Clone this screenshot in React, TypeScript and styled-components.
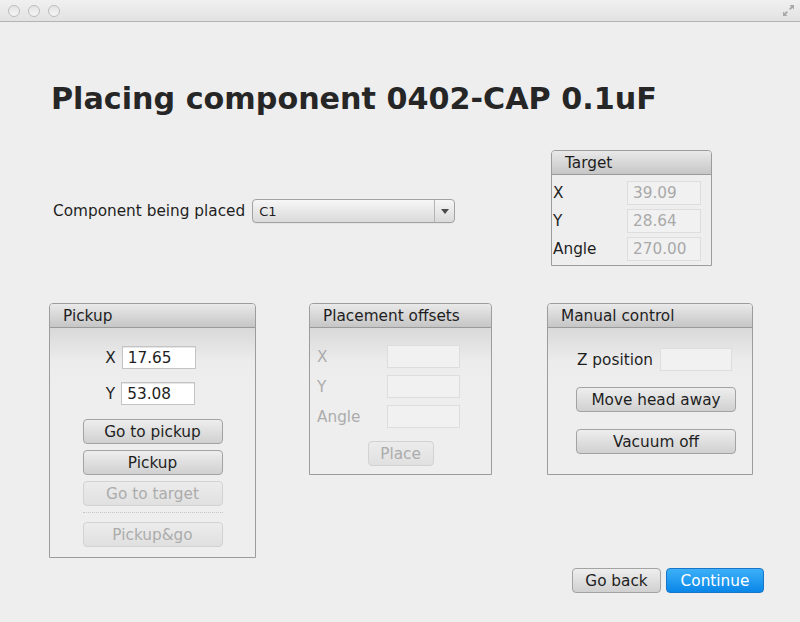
import React from "react";
import styled, { createGlobalStyle, css } from "styled-components";

const Global = createGlobalStyle`
  html, body { margin: 0; padding: 0; background: #eeeeee; }
  body { font-family: "DejaVu Sans", "Liberation Sans", sans-serif; }
  * { box-sizing: border-box; }
`;

const Window = styled.div`
  width: 800px;
  height: 622px;
  background: #eeeeee;
  display: flex;
  flex-direction: column;
  font-family: "DejaVu Sans", "Liberation Sans", sans-serif;
  font-size: 15.3px;
  color: #1e1e1e;
`;

const TitleBar = styled.div`
  height: 22px;
  flex: none;
  background: linear-gradient(#f0f0f0, #e2e2e2);
  border-bottom: 1px solid #b4b4b4;
  display: flex;
  align-items: center;
  padding: 0 0 0 8px;
  gap: 8px;
`;

const Light = styled.span`
  width: 12px;
  height: 12px;
  border-radius: 50%;
  border: 1px solid #bdbdbd;
  background: linear-gradient(#e4e4e4, #f4f4f4);
`;

const FullScreen = styled.svg`
  margin-left: auto;
  margin-right: 5px;
  width: 13px;
  height: 13px;
`;

const Title = styled.h1`
  margin: 59px 0 0 51px;
  font-size: 30.2px;
  line-height: 36px;
  font-weight: bold;
  color: #262626;
`;

const TopRow = styled.div`
  display: flex;
  justify-content: space-between;
  align-items: flex-start;
  margin-top: 33px;
  padding: 0 88px 0 53px;
`;

const ComboRow = styled.div`
  display: flex;
  align-items: center;
  gap: 7px;
  margin-top: 49px;
`;

const Label = styled.span<{ $disabled?: boolean }>`
  color: ${(p) => (p.$disabled ? "#acacac" : "#1e1e1e")};
  white-space: nowrap;
`;

const Combo = styled.div`
  width: 203px;
  height: 24px;
  border: 1px solid #a2a2a2;
  border-radius: 4px;
  background: linear-gradient(#f6f6f6, #dadada);
  display: flex;
  align-items: stretch;
  font-size: 13px;
  box-shadow: 0 1px 0 rgba(0, 0, 0, 0.04);
`;

const ComboText = styled.span`
  flex: 1;
  display: flex;
  align-items: center;
  padding-left: 6px;
  color: #1e1e1e;
`;

const ComboArrow = styled.span`
  width: 20px;
  border-left: 1px solid #b4b4b4;
  display: flex;
  align-items: center;
  justify-content: center;
  &::after {
    content: "";
    border-left: 4px solid transparent;
    border-right: 4px solid transparent;
    border-top: 5px solid #4a4a4a;
  }
`;

const Panel = styled.div<{ $w: number; $h?: number; $ml?: number }>`
  width: ${(p) => p.$w}px;
  ${(p) => (p.$h ? `height: ${p.$h}px;` : "")}
  margin-left: ${(p) => p.$ml ?? 0}px;
  border: 1px solid #9c9c9c;
  border-radius: 4px 4px 0 0;
  display: flex;
  flex-direction: column;
  flex: none;
`;

const PanelHeader = styled.div`
  height: 24px;
  flex: none;
  border-radius: 3px 3px 0 0;
  background: linear-gradient(#e9e9e9, #c6c6c6);
  border-bottom: 1px solid #9a9a9a;
  padding-left: 13px;
  display: flex;
  align-items: center;
  color: #1e1e1e;
`;

const PanelBody = styled.div<{ $flat?: boolean }>`
  flex: 1;
  display: flex;
  flex-direction: column;
  ${(p) =>
    p.$flat
      ? css`
          background: #eeeeee;
        `
      : css`
          background: linear-gradient(#d9d9d9 0px, #ececec 34px, #eeeeee 60px);
        `}
`;

const Field = styled.div<{ $w: number; $disabled?: boolean; $h?: number }>`
  width: ${(p) => p.$w}px;
  height: ${(p) => p.$h ?? 23}px;
  display: flex;
  align-items: center;
  padding-left: 5px;
  ${(p) =>
    p.$disabled
      ? css`
          background: #f1f1f1;
          border: 1px solid #dddddd;
          color: #a9a9a9;
        `
      : css`
          background: #ffffff;
          border: 1px solid #c4c4c4;
          box-shadow: inset 0 1px 0 #e6e6e6;
          color: #1e1e1e;
        `}
`;

const TargetGrid = styled.div`
  display: grid;
  grid-template-columns: 74px 74px;
  row-gap: 4px;
  align-items: center;
  padding: 6px 0 4px 1px;
`;

const Button = styled.button<{ $w: number; $primary?: boolean }>`
  width: ${(p) => p.$w}px;
  height: 25px;
  font-family: inherit;
  font-size: 15.3px;
  border-radius: 4px;
  padding: 0;
  flex: none;
  ${(p) =>
    p.$primary
      ? css`
          background: linear-gradient(#3cb0f7, #0a86e8);
          border: 1px solid #1776c9;
          color: #ffffff;
        `
      : css`
          background: linear-gradient(#eeeeee, #d0d0d0);
          border: 1px solid #a3a3a3;
          color: #1e1e1e;
          &:disabled {
            background: linear-gradient(#ececec, #e0e0e0);
            border: 1px solid #d2d2d2;
            color: #acacac;
          }
        `}
`;

const PanelsRow = styled.div`
  display: flex;
  align-items: flex-start;
  margin-top: 37px;
  padding-left: 49px;
`;

const PickupBody = styled(PanelBody)`
  align-items: center;
  padding: 18px 0 10px 2px;
`;

const XYRow = styled.div<{ $mt?: number }>`
  display: flex;
  align-items: center;
  gap: 6px;
  margin-top: ${(p) => p.$mt ?? 0}px;
  margin-left: -6px;
`;

const ButtonStack = styled.div`
  display: flex;
  flex-direction: column;
  gap: 6px;
  margin-top: 14px;
  margin-left: -2px;
`;

const Separator = styled.div`
  height: 0;
  border-top: 1px dotted #c6c6c6;
  margin: 0 0 3px;
`;

const OffsetsBody = styled(PanelBody)`
  padding: 17px 0 0 7px;
`;

const OffsetsGrid = styled.div`
  display: grid;
  grid-template-columns: 70px 73px;
  row-gap: 7px;
  align-items: center;
`;

const CenterRow = styled.div`
  display: flex;
  justify-content: center;
  margin: 13px 0 0 -7px;
`;

const ManualBody = styled(PanelBody)`
  padding: 20px 0 0 28px;
`;

const ZRow = styled.div`
  display: flex;
  align-items: center;
  gap: 7px;
  padding-left: 1px;
`;

const ManualStack = styled.div`
  display: flex;
  flex-direction: column;
  gap: 17px;
  margin-top: 16px;
`;

const Footer = styled.div`
  margin-top: auto;
  display: flex;
  justify-content: flex-end;
  gap: 5px;
  padding: 0 36px 29px 0;
`;

export default function App() {
  return (
    <Window>
      <Global />
      <TitleBar>
        <Light />
        <Light />
        <Light />
        <FullScreen viewBox="0 0 13 13">
          <path d="M7.5 1 H12 V5.5 L10.4 3.9 L8.3 6 L7 4.7 L9.1 2.6 Z" fill="#a9a9a9" />
          <path d="M5.5 12 H1 V7.5 L2.6 9.1 L4.7 7 L6 8.3 L3.9 10.4 Z" fill="#a9a9a9" />
        </FullScreen>
      </TitleBar>

      <Title>Placing component 0402-CAP 0.1uF</Title>

      <TopRow>
        <ComboRow>
          <Label>Component being placed</Label>
          <Combo>
            <ComboText>C1</ComboText>
            <ComboArrow />
          </Combo>
        </ComboRow>
        <Panel $w={161}>
          <PanelHeader>Target</PanelHeader>
          <PanelBody $flat>
            <TargetGrid>
              <Label>X</Label>
              <Field $w={74} $h={24} $disabled>39.09</Field>
              <Label>Y</Label>
              <Field $w={74} $h={24} $disabled>28.64</Field>
              <Label>Angle</Label>
              <Field $w={74} $h={24} $disabled>270.00</Field>
            </TargetGrid>
          </PanelBody>
        </Panel>
      </TopRow>

      <PanelsRow>
        <Panel $w={207} $h={255}>
          <PanelHeader>Pickup</PanelHeader>
          <PickupBody>
            <XYRow>
              <Label>X</Label>
              <Field $w={74}>17.65</Field>
            </XYRow>
            <XYRow $mt={13}>
              <Label>Y</Label>
              <Field $w={74}>53.08</Field>
            </XYRow>
            <ButtonStack>
              <Button $w={140}>Go to pickup</Button>
              <Button $w={140}>Pickup</Button>
              <Button $w={140} disabled>
                Go to target
              </Button>
              <Separator />
              <Button $w={140} disabled>
                Pickup&amp;go
              </Button>
            </ButtonStack>
          </PickupBody>
        </Panel>

        <Panel $w={183} $h={172} $ml={53}>
          <PanelHeader>Placement offsets</PanelHeader>
          <OffsetsBody>
            <OffsetsGrid>
              <Label $disabled>X</Label>
              <Field $w={73} $disabled />
              <Label $disabled>Y</Label>
              <Field $w={73} $disabled />
              <Label $disabled>Angle</Label>
              <Field $w={73} $disabled />
            </OffsetsGrid>
            <CenterRow>
              <Button $w={66} disabled>
                Place
              </Button>
            </CenterRow>
          </OffsetsBody>
        </Panel>

        <Panel $w={206} $h={172} $ml={55}>
          <PanelHeader>Manual control</PanelHeader>
          <ManualBody>
            <ZRow>
              <Label>Z position</Label>
              <Field $w={72} $disabled />
            </ZRow>
            <ManualStack>
              <Button $w={160}>Move head away</Button>
              <Button $w={160}>Vacuum off</Button>
            </ManualStack>
          </ManualBody>
        </Panel>
      </PanelsRow>

      <Footer>
        <Button $w={89}>Go back</Button>
        <Button $w={98} $primary>
          Continue
        </Button>
      </Footer>
    </Window>
  );
}
